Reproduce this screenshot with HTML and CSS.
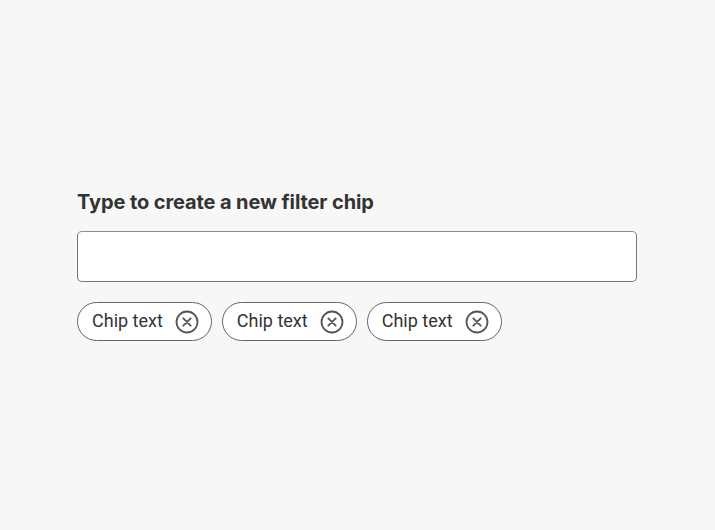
FILE: index.html
```html
<!DOCTYPE html>
<html lang="en">
<head>
<meta charset="utf-8">
<title>Filter chips</title>
<link rel="stylesheet" href="styles.css">
</head>
<body>
<main class="page">
  <div class="field">
    <label class="field-label" for="chip-input">Type to create a new filter chip</label>
    <input class="field-input" id="chip-input" type="text">
    <div class="chips">
      <span class="chip"><span class="chip-text">Chip text</span><button class="chip-remove" aria-label="Remove"><svg viewBox="0 0 24 24" width="24" height="24"><circle cx="12" cy="12" r="10.5" fill="none" stroke="#555" stroke-width="1.8"/><path d="M8.3 8.3 L15.7 15.7 M15.7 8.3 L8.3 15.7" stroke="#555" stroke-width="1.8" stroke-linecap="round"/></svg></button></span>
      <span class="chip"><span class="chip-text">Chip text</span><button class="chip-remove" aria-label="Remove"><svg viewBox="0 0 24 24" width="24" height="24"><circle cx="12" cy="12" r="10.5" fill="none" stroke="#555" stroke-width="1.8"/><path d="M8.3 8.3 L15.7 15.7 M15.7 8.3 L8.3 15.7" stroke="#555" stroke-width="1.8" stroke-linecap="round"/></svg></button></span>
      <span class="chip"><span class="chip-text">Chip text</span><button class="chip-remove" aria-label="Remove"><svg viewBox="0 0 24 24" width="24" height="24"><circle cx="12" cy="12" r="10.5" fill="none" stroke="#555" stroke-width="1.8"/><path d="M8.3 8.3 L15.7 15.7 M15.7 8.3 L8.3 15.7" stroke="#555" stroke-width="1.8" stroke-linecap="round"/></svg></button></span>
    </div>
  </div>
</main>
</body>
</html>
```

FILE: styles.css
```css
html, body {
  margin: 0;
  padding: 0;
  background: #f7f7f7;
}
.page {
  height: 530px;
  display: flex;
  padding: 190px 0 0 77px;
  box-sizing: border-box;
  font-family: Roboto, "Liberation Sans", sans-serif;
  color: #333;
}
.field {
  width: 560px;
  display: flex;
  flex-direction: column;
}
.field-label {
  font-family: Inter, Roboto, sans-serif;
  font-weight: 700;
  font-size: 20px;
  line-height: 24px;
  color: #333;
  letter-spacing: -0.1px;
}
.field-input {
  margin-top: 17px;
  height: 51px;
  box-sizing: border-box;
  border: 1px solid #757575;
  border-top-color: #8e8e8e;
  border-radius: 5px;
  background: #fff;
  padding: 0 12px;
  font-size: 18px;
}
.chips {
  display: flex;
  gap: 10px;
  margin-top: 20px;
}
.chip {
  display: inline-flex;
  align-items: center;
  height: 39px;
  box-sizing: border-box;
  border: 1px solid #666;
  border-radius: 20px;
  padding: 0 12px 0 14px;
  background: #fff;
}
.chip-text {
  font-size: 18px;
  color: #333;
  line-height: 20px;
  padding-bottom: 2px;
}
.chip-remove {
  display: flex;
  margin-left: 12px;
  padding: 0;
  border: 0;
  background: none;
}
```
